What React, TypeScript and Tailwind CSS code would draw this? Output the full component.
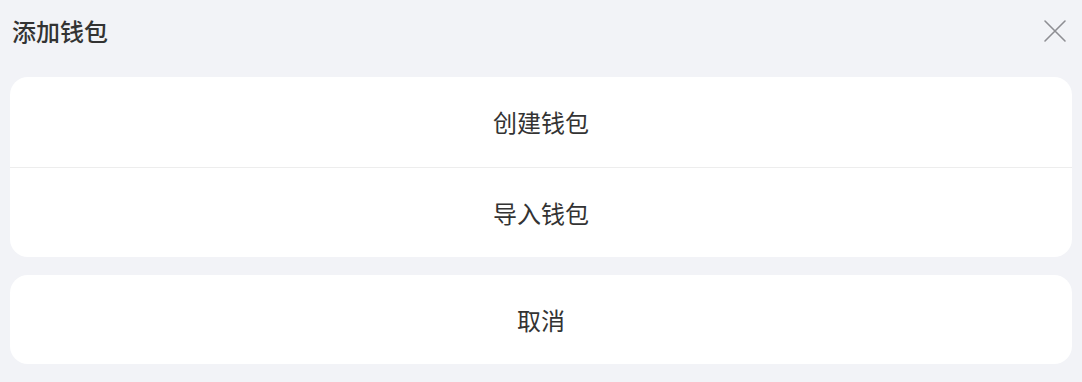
import React from "react";

const font = { fontFamily: '"Noto Sans CJK SC", "Noto Sans", sans-serif' };

function CloseIcon() {
  return (
    <svg width="24" height="24" viewBox="0 0 24 24" fill="none" stroke="#8e8e93" strokeWidth="1.6" strokeLinecap="round">
      <path d="M2 2 L22 22 M22 2 L2 22" />
    </svg>
  );
}

export default function App() {
  const actions = ["创建钱包", "导入钱包"];

  return (
    <div className="min-h-[382px] w-full bg-[#f2f3f7] px-[10px] pb-[18px]" style={font}>
      <header className="flex h-[62px] items-center justify-between pl-[2px] pr-[5px]">
        <h1 className="text-[24px] font-medium text-[#333333]">添加钱包</h1>
        <button className="flex h-[24px] w-[24px] items-center justify-center">
          <CloseIcon />
        </button>
      </header>

      <div className="mt-[15px] overflow-hidden rounded-[18px] bg-white">
        {actions.map((label, index) => (
          <button
            key={label}
            className={`flex h-[90px] w-full items-center justify-center text-[24px] text-[#333333] ${
              index > 0 ? "border-t border-[#ededed]" : ""
            }`}
          >
            {label}
          </button>
        ))}
      </div>

      <button className="mt-[18px] flex h-[89px] w-full items-center justify-center rounded-[18px] bg-white text-[24px] text-[#333333]">
        取消
      </button>
    </div>
  );
}
